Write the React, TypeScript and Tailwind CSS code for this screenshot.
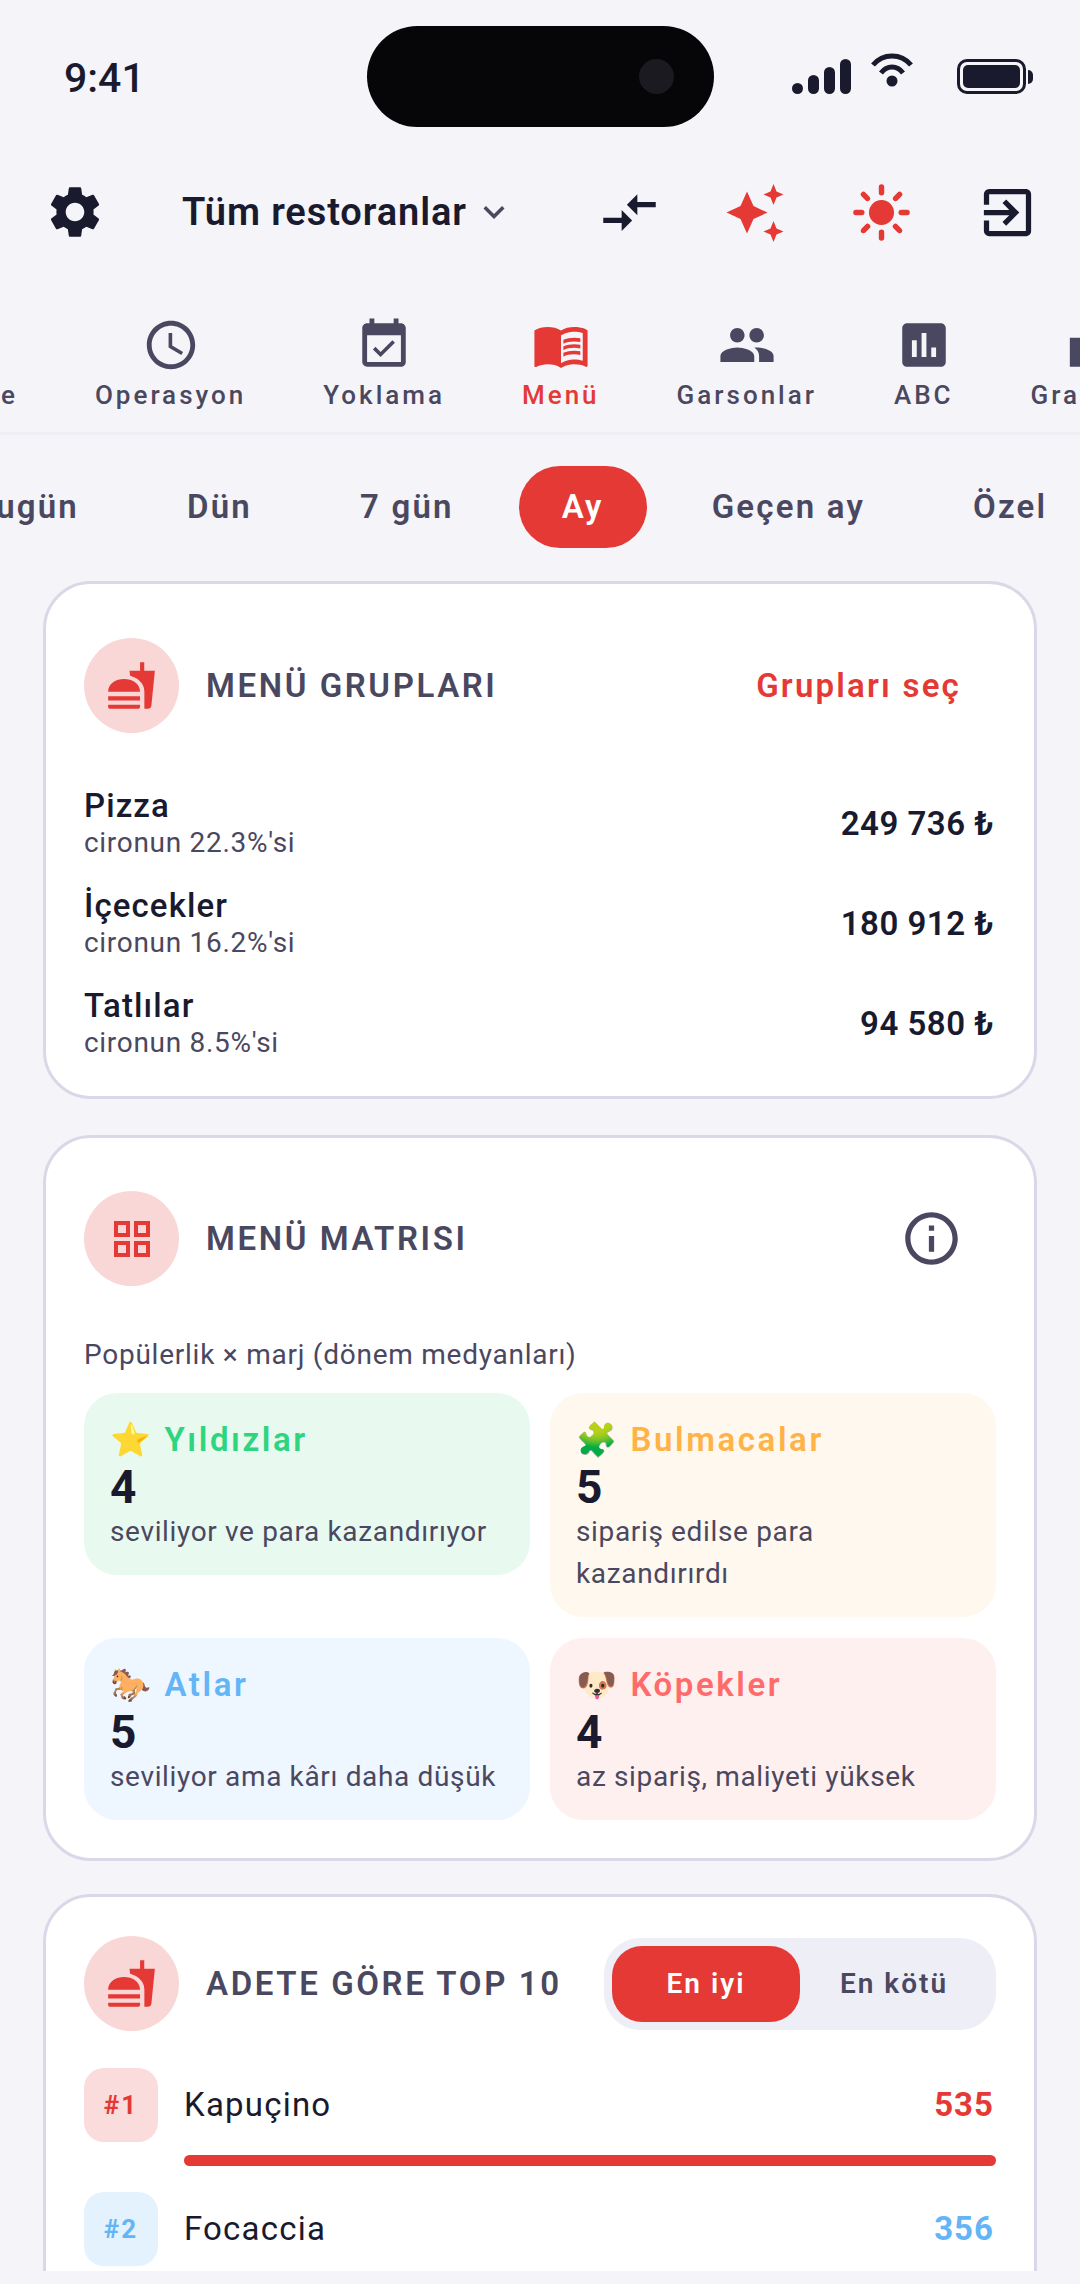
import type { ReactNode } from "react";
import {
  MdAccessTime,
  MdAssessment,
  MdCompareArrows,
  MdEventAvailable,
  MdExitToApp,
  MdFastfood,
  MdGridView,
  MdInfoOutline,
  MdKeyboardArrowDown,
  MdLeaderboard,
  MdMenuBook,
  MdPeople,
  MdSettings,
} from "react-icons/md";
import { IoSunny } from "react-icons/io5";
import type { IconType } from "react-icons";

type NavTab = { label: string; icon?: IconType; active?: boolean };

const navTabs: NavTab[] = [
  { label: "Özetle" },
  { label: "Operasyon", icon: MdAccessTime },
  { label: "Yoklama", icon: MdEventAvailable },
  { label: "Menü", icon: MdMenuBook, active: true },
  { label: "Garsonlar", icon: MdPeople },
  { label: "ABC", icon: MdAssessment },
  { label: "Grafikler", icon: MdLeaderboard },
];

const periods = ["Bugün", "Dün", "7 gün", "Ay", "Geçen ay", "Özel"];

const groups = [
  { name: "Pizza", share: "cironun 22.3%'si", total: "249 736 ₺" },
  { name: "İçecekler", share: "cironun 16.2%'si", total: "180 912 ₺" },
  { name: "Tatlılar", share: "cironun 8.5%'si", total: "94 580 ₺" },
];

function SparklesIcon() {
  return (
    <svg width="63" height="63" viewBox="0 0 63 63" fill="currentColor">
      <path d="M23 10.5 L29.5 25 L43.5 31.5 L29.5 38 L23 52.5 L16.5 38 L2.5 31.5 L16.5 25 Z" />
      <path d="M49.5 3 L52.5 10.5 L59.5 13.5 L52.5 16.5 L49.5 24 L46.5 16.5 L39.5 13.5 L46.5 10.5 Z" />
      <path d="M49.5 40 L52.5 47.5 L59.5 50.5 L52.5 53.5 L49.5 61 L46.5 53.5 L39.5 50.5 L46.5 47.5 Z" />
    </svg>
  );
}

function StatusBar() {
  return (
    <div className="relative flex h-[150px] items-start justify-between pl-[64px] pr-[47px] pt-[54px]">
      <span className="text-[41px] font-medium leading-[48px] text-[#1a1a2e]">9:41</span>
      <div className="absolute left-[367px] top-[26px] flex h-[101px] w-[347px] items-center justify-end rounded-full bg-[#060608] pr-[40px]">
        <div className="h-[35px] w-[35px] rounded-full bg-[#1a1a20]" />
      </div>
      <div className="flex items-start text-[#1a1a2e]">
        <div className="mt-[5px] flex h-[35px] items-end gap-[5px]">
          <div className="h-[11px] w-[11px] rounded-full bg-current" />
          <div className="h-[19px] w-[11px] rounded-full bg-current" />
          <div className="h-[27px] w-[11px] rounded-full bg-current" />
          <div className="h-[35px] w-[11px] rounded-full bg-current" />
        </div>
        <svg width="44" height="36" viewBox="0 0 44 36" className="ml-[19px] mt-[-2px]" fill="none">
          <path d="M3 13 C13 1 31 1 41 13" stroke="currentColor" strokeWidth="5" />
          <path d="M11 21 C17 13 27 13 33 21" stroke="currentColor" strokeWidth="5" />
          <circle cx="22" cy="29" r="5.5" fill="currentColor" />
        </svg>
        <div className="ml-[43px] mt-[5px] flex items-center gap-[2px]">
          <div className="h-[35px] w-[69px] rounded-[10px] border-[3px] border-current p-[3px]">
            <div className="h-full w-full rounded-[5px] bg-current" />
          </div>
          <div className="h-[14px] w-[5px] rounded-r-full bg-current" />
        </div>
      </div>
    </div>
  );
}

function TopBar() {
  return (
    <div className="flex h-[124px] items-center pl-[44px] pr-[41px] text-[#1a1a2e]">
      <MdSettings size={62} />
      <span className="ml-[76px] text-[38px] font-semibold tracking-[0.9px]">Tüm restoranlar</span>
      <MdKeyboardArrowDown size={42} className="ml-[6px] text-[#4a4860]" />
      <div className="ml-auto flex items-center gap-[63px]">
        <MdCompareArrows size={63} />
        <div className="text-[#e53935]">
          <SparklesIcon />
        </div>
        <IoSunny size={63} className="text-[#e53935]" />
        <MdExitToApp size={63} />
      </div>
    </div>
  );
}

function NavTabs() {
  return (
    <div className="overflow-hidden border-b-[3px] border-[#eeeef5] pb-[20px] pt-[42px]">
      <div className="ml-[-74px] flex gap-[77px]">
        {navTabs.map((tab) => {
          const Icon = tab.icon;
          return (
            <div
              key={tab.label}
              className={`flex shrink-0 flex-col items-center gap-[2px] ${
                tab.active ? "text-[#e53935]" : "text-[#4a4860]"
              }`}
            >
              <div className="h-[60px]">{Icon && <Icon size={58} />}</div>
              <span className="text-[26px] font-medium leading-[34px] tracking-[3px]">
                {tab.label}
              </span>
            </div>
          );
        })}
      </div>
    </div>
  );
}

function PeriodTabs() {
  return (
    <div className="overflow-hidden pt-[31px]">
      <div className="ml-[-70px] flex gap-[22px]">
        {periods.map((p) => (
          <div
            key={p}
            className={`flex h-[82px] shrink-0 items-center rounded-full px-[43px] text-[33px] font-semibold tracking-[2.2px] ${
              p === "Ay" ? "bg-[#e53935] text-white" : "text-[#4a4860]"
            }`}
          >
            {p}
          </div>
        ))}
      </div>
    </div>
  );
}

function CardIcon({ children }: { children: ReactNode }) {
  return (
    <div className="flex h-[95px] w-[95px] shrink-0 items-center justify-center rounded-full bg-[#fad7d7] text-[#e53935]">
      {children}
    </div>
  );
}

function CardTitle({ children }: { children: ReactNode }) {
  return (
    <span className="ml-[27px] text-[33px] font-semibold tracking-[2.6px] text-[#4a4860]">
      {children}
    </span>
  );
}

function Card({ className, children }: { className?: string; children: ReactNode }) {
  return (
    <div
      className={`mx-[43px] rounded-[48px] border-[3px] border-[#d8d8e8] bg-white px-[38px] ${className ?? ""}`}
    >
      {children}
    </div>
  );
}

function GroupsCard() {
  return (
    <Card className="mt-[33px] pb-[35px] pt-[54px]">
      <div className="flex items-center">
        <CardIcon>
          <MdFastfood size={51} />
        </CardIcon>
        <CardTitle>MENÜ GRUPLARI</CardTitle>
        <span className="ml-auto mr-[35px] text-[33px] font-semibold tracking-[2.2px] text-[#e53935]">
          Grupları seç
        </span>
      </div>
      <div className="mt-[54px] flex flex-col gap-[26px]">
        {groups.map((g) => (
          <div key={g.name} className="flex items-center justify-between">
            <div className="flex flex-col">
              <span className="text-[33px] font-medium leading-[38px] tracking-[1.1px] text-[#1a1a2e]">
                {g.name}
              </span>
              <span className="text-[28px] leading-[36px] tracking-[0.7px] text-[#4a4860]">
                {g.share}
              </span>
            </div>
            <span className="mr-[2px] text-[33px] font-semibold tracking-[0.5px] text-[#1a1a2e]">
              {g.total}
            </span>
          </div>
        ))}
      </div>
    </Card>
  );
}

function MatrixCell({
  bg,
  color,
  emoji,
  label,
  count,
  desc,
}: {
  bg: string;
  color: string;
  emoji: string;
  label: string;
  count: number;
  desc: string;
}) {
  return (
    <div className={`rounded-[33px] px-[26px] pb-[22px] pt-[24px] ${bg}`}>
      <div className={`text-[33px] font-semibold leading-[46px] tracking-[2.6px] ${color}`}>
        {emoji} {label}
      </div>
      <div className="text-[46px] font-bold leading-[48px] text-[#1a1a2e]">{count}</div>
      <div className="text-[28px] leading-[42px] tracking-[0.65px] text-[#4a4860]">{desc}</div>
    </div>
  );
}

function MatrixCard() {
  return (
    <Card className="mt-[36px] pb-[38px] pt-[53px]">
      <div className="flex items-center">
        <CardIcon>
          <MdGridView size={48} />
        </CardIcon>
        <CardTitle>MENÜ MATRISI</CardTitle>
        <MdInfoOutline size={63} className="ml-auto mr-[33px] text-[#4a4860]" />
      </div>
      <p className="mt-[48px] text-[28px] leading-[42px] tracking-[0.75px] text-[#4a4860]">
        Popülerlik × marj (dönem medyanları)
      </p>
      <div className="mt-[17px] grid grid-cols-2 items-start gap-x-[20px] gap-y-[21px]">
        <MatrixCell
          bg="bg-[#e8f9f0]"
          color="text-[#2ed47e]"
          emoji="⭐"
          label="Yıldızlar"
          count={4}
          desc="seviliyor ve para kazandırıyor"
        />
        <MatrixCell
          bg="bg-[#fff8ee]"
          color="text-[#ffb347]"
          emoji="🧩"
          label="Bulmacalar"
          count={5}
          desc="sipariş edilse para kazandırırdı"
        />
        <MatrixCell
          bg="bg-[#eef6ff]"
          color="text-[#64b5f6]"
          emoji="🐎"
          label="Atlar"
          count={5}
          desc="seviliyor ama kârı daha düşük"
        />
        <MatrixCell
          bg="bg-[#fff0f0]"
          color="text-[#ff6b6b]"
          emoji="🐶"
          label="Köpekler"
          count={4}
          desc="az sipariş, maliyeti yüksek"
        />
      </div>
    </Card>
  );
}

// the list runs on below the fold, so the card is taller than the visible area
function TopCard() {
  return (
    <Card className="mt-[33px] pb-[80px] pt-[39px]">
      <div className="flex items-center">
        <CardIcon>
          <MdFastfood size={51} />
        </CardIcon>
        <CardTitle>ADETE GÖRE TOP 10</CardTitle>
        <div className="ml-auto flex h-[92px] w-[392px] items-center rounded-[36px] bg-[#eeeef7] px-[8px]">
          <div className="flex h-[76px] w-[188px] items-center justify-center rounded-[30px] bg-[#e53935] text-[28px] font-semibold tracking-[2px] text-white">
            En iyi
          </div>
          <div className="flex flex-1 items-center justify-center text-[28px] font-semibold tracking-[2px] text-[#4a4860]">
            En kötü
          </div>
        </div>
      </div>
      <div className="mt-[37px] flex items-start gap-[26px]">
        <div className="flex h-[74px] w-[74px] shrink-0 items-center justify-center rounded-[20px] bg-[#fadcdc] text-[26px] font-bold tracking-[2px] text-[#e53935]">
          #1
        </div>
        <div className="flex-1">
          <div className="flex h-[74px] items-center justify-between">
            <span className="text-[33px] tracking-[1.2px] text-[#1a1a2e]">Kapuçino</span>
            <span className="mr-[2px] text-[33px] font-bold tracking-[1px] text-[#e53935]">535</span>
          </div>
          <div className="mt-[13px] h-[11px] rounded-full bg-[#e53935]" />
        </div>
      </div>
      <div className="mt-[26px] flex items-start gap-[26px]">
        <div className="flex h-[74px] w-[74px] shrink-0 items-center justify-center rounded-[20px] bg-[#e3f2fd] text-[26px] font-bold tracking-[2px] text-[#64b5f6]">
          #2
        </div>
        <div className="flex h-[74px] flex-1 items-center justify-between">
          <span className="text-[33px] tracking-[1.2px] text-[#1a1a2e]">Focaccia</span>
          <span className="mr-[2px] text-[33px] font-bold tracking-[1px] text-[#64b5f6]">356</span>
        </div>
      </div>
    </Card>
  );
}

export default function App() {
  return (
    <div className="h-[2284px] w-[1080px] overflow-hidden bg-[#f4f4f9] [font-family:Roboto,sans-serif]">
      <div className="h-[2271px] overflow-hidden">
        <StatusBar />
        <TopBar />
        <NavTabs />
        <PeriodTabs />
        <GroupsCard />
        <MatrixCard />
        <TopCard />
      </div>
    </div>
  );
}
